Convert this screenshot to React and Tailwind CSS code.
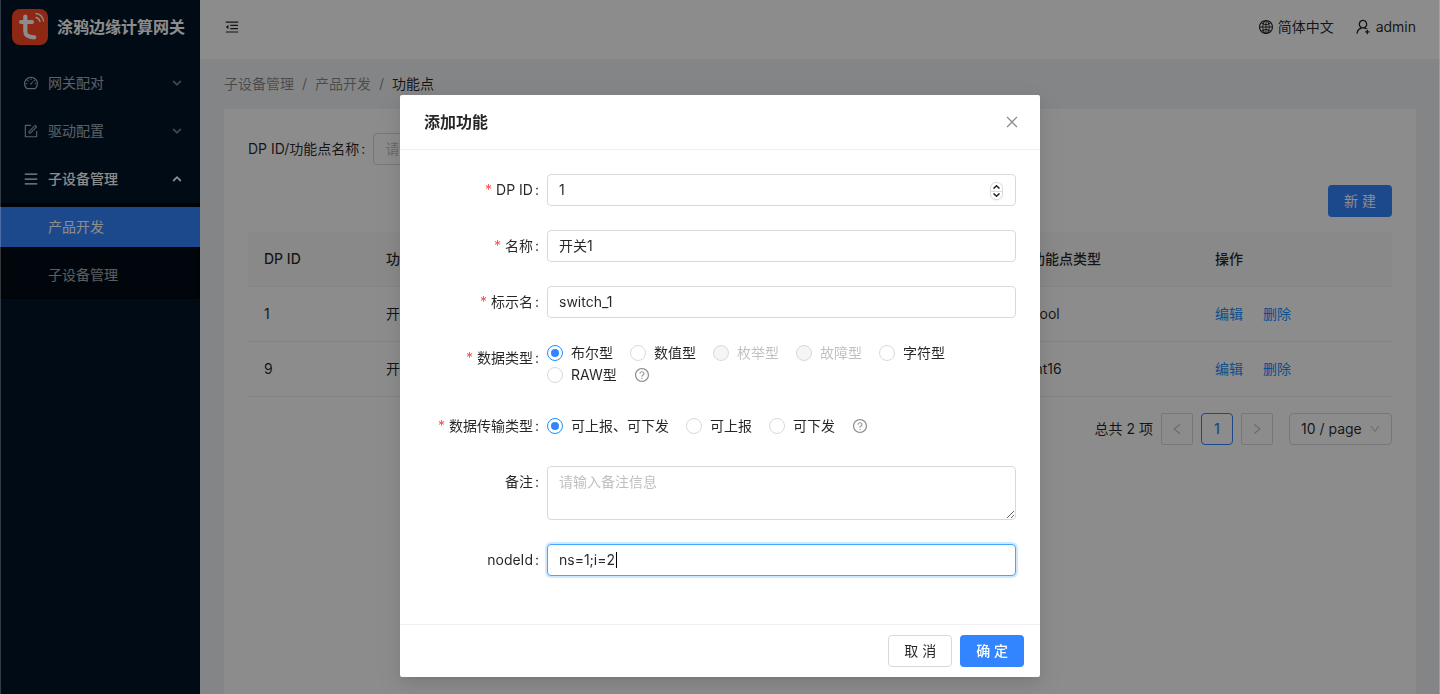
import React, { useEffect, useRef, useState } from "react";
import {
  AiOutlineClose,
  AiOutlineDashboard,
  AiOutlineDown,
  AiOutlineForm,
  AiOutlineGlobal,
  AiOutlineLeft,
  AiOutlineMenu,
  AiOutlineMenuFold,
  AiOutlineQuestionCircle,
  AiOutlineRight,
  AiOutlineUserAdd,
} from "react-icons/ai";

const rows = [
  { id: 1, name: "开关1", code: "switch_1", transfer: "可上报、可下发", type: "bool" },
  { id: 9, name: "开关9", code: "switch_9", transfer: "可上报、可下发", type: "int16" },
];

const dataTypes = [
  { value: "bool", label: "布尔型" },
  { value: "value", label: "数值型" },
  { value: "enum", label: "枚举型", disabled: true },
  { value: "fault", label: "故障型", disabled: true },
  { value: "string", label: "字符型" },
  { value: "raw", label: "RAW型" },
];

const transferTypes = [
  { value: "rw", label: "可上报、可下发" },
  { value: "ro", label: "可上报" },
  { value: "wr", label: "可下发" },
];

const inputClass =
  "block w-full h-8 px-[11px] pb-[2px] text-sm rounded border border-[#d9d9d9] bg-white outline-none placeholder:text-[#bfbfbf] focus:border-[#40a9ff] focus:shadow-[0_0_0_2px_rgba(24,144,255,0.2)]";

const Logo = () => (
  <svg viewBox="0 0 36 36" className="size-9 shrink-0" fill="none" strokeLinecap="round">
    <rect width="36" height="36" rx="8" fill="#ff4a26" />
    <path d="M13.300 7.500v14.500c0 4.500 2.500 6.300 9 6.300" stroke="#fff" strokeWidth="4.200" />
    <path d="M9 13h11" stroke="#fff" strokeWidth="4" />
    <path d="M24 8.500q3.300 .6 4 4" stroke="#fff" strokeWidth="1.300" />
    <path d="M24 4.500q6.500 1 7.500 7.500" stroke="#fff" strokeWidth="1.300" />
  </svg>
);

const Caret = ({ open }) => (
  <svg
    viewBox="0 0 10 10"
    className={`size-[10px] ${open ? "" : "opacity-70"}`}
    fill="none"
    stroke="currentColor"
    strokeWidth="1.800"
  >
    <path d={open ? "M1.200 7L5 3.200L8.800 7" : "M1.200 3L5 6.800L8.800 3"} />
  </svg>
);

const MenuTitle = ({ icon, open, children }) => (
  <button
    type="button"
    className={`flex h-10 w-full items-center gap-[9px] pl-[23px] pr-[18px] my-1 text-left ${open ? "text-white" : "text-white/65"}`}
  >
    {icon}
    <span className="flex-1">{children}</span>
    <Caret open={open} />
  </button>
);

const Sidebar = () => (
  <aside className="w-[200px] shrink-0 bg-[#001529]">
    <div className="flex h-[59px] items-center gap-2 pl-3 pb-1.5">
      <Logo />
      <h1 className="text-base font-semibold text-white whitespace-nowrap pl-px">涂鸦边缘计算网关</h1>
    </div>
    <nav className="flex flex-col">
      <div className="flex flex-col">
        <MenuTitle icon={<AiOutlineDashboard className="size-4" />}>网关配对</MenuTitle>
        <MenuTitle icon={<AiOutlineForm className="size-4" />}>驱动配置</MenuTitle>
        <MenuTitle icon={<AiOutlineMenu className="size-4" />} open>
          <span className="font-medium">子设备管理</span>
        </MenuTitle>
      </div>
      <div className="flex flex-col gap-2 bg-[#000c17] py-1 shadow-[inset_0_2px_8px_rgba(0,0,0,0.45)]">
        <a href="#" className="h-10 bg-[#3385ff] pl-12 leading-10 text-white">产品开发</a>
        <a href="#" className="h-10 pl-12 leading-10 text-white/65">子设备管理</a>
      </div>
    </nav>
  </aside>
);

const Header = () => (
  <header className="flex h-[59px] items-center justify-between bg-white px-6 pb-1.5">
    <button type="button" aria-label="收起菜单">
      <AiOutlineMenuFold className="size-4" />
    </button>
    <div className="flex items-center gap-5">
      <button type="button" className="flex items-center gap-1">
        <AiOutlineGlobal className="size-4" />
        简体中文
      </button>
      <button type="button" className="flex items-center gap-1">
        <AiOutlineUserAdd className="size-[18px]" />
        admin
      </button>
    </div>
  </header>
);

const DataTable = () => (
  <table className="w-full table-fixed text-left">
    <thead className="bg-[#fafafa]">
      <tr className="h-[54px] border-b border-[#f0f0f0]">
        <th className="w-[122px] px-4 font-medium">DP ID</th>
        <th className="px-4 font-medium">功能点名称</th>
        <th className="px-4 font-medium">标示名</th>
        <th className="px-4 font-medium">数据传输类型</th>
        <th className="w-[184px] px-4 font-medium">功能点类型</th>
        <th className="w-[193px] px-4 font-medium">操作</th>
      </tr>
    </thead>
    <tbody>
      {rows.map((row) => (
        <tr key={row.id} className="h-[55px] border-b border-[#f0f0f0]">
          <td className="px-4">{row.id}</td>
          <td className="px-4">{row.name}</td>
          <td className="px-4">{row.code}</td>
          <td className="px-4">{row.transfer}</td>
          <td className="px-4">{row.type}</td>
          <td className="px-4">
            <div className="flex gap-5 text-[#1890ff]">
              <a href="#">编辑</a>
              <a href="#">删除</a>
            </div>
          </td>
        </tr>
      ))}
    </tbody>
  </table>
);

const Pagination = () => (
  <div className="mt-4 flex items-center justify-end gap-2">
    <span>总共 2 项</span>
    <button type="button" disabled aria-label="上一页" className="flex size-8 items-center justify-center rounded-xs border border-[#d9d9d9] text-black/25">
      <AiOutlineLeft className="size-[14px]" />
    </button>
    <button type="button" className="size-8 rounded border border-[#3385ff] font-medium text-[#3385ff]">1</button>
    <button type="button" disabled aria-label="下一页" className="flex size-8 items-center justify-center rounded-xs border border-[#d9d9d9] text-black/25">
      <AiOutlineRight className="size-[14px]" />
    </button>
    <div className="relative ml-2">
      <select aria-label="每页条数" className="h-8 w-[103px] appearance-none rounded border border-[#d9d9d9] bg-white pl-[11px] pr-6">
        <option>10 / page</option>
        <option>20 / page</option>
      </select>
      <AiOutlineDown className="pointer-events-none absolute right-[11px] top-[10px] size-3 text-black/25" />
    </div>
  </div>
);

const FormItem = ({ label, required, htmlFor, children }) => (
  <div className="mb-6 flex items-start">
    <label htmlFor={htmlFor} className="flex h-8 w-[123px] shrink-0 items-center justify-end pr-2 whitespace-nowrap">
      {required && <span className="mr-1 text-[#ff4d4f]">*</span>}
      {label}
      <span className="ml-[2px]">:</span>
    </label>
    <div className="min-w-0 flex-1">{children}</div>
  </div>
);

const RadioGroup = ({ name, options, value, onChange }) => (
  <div className="flex flex-wrap items-center">
    {options.map((item) => (
      <label key={item.value} className={`mr-[9px] flex h-[22px] items-center ${item.disabled ? "text-black/25" : ""}`}>
        <input
          type="radio"
          name={name}
          disabled={item.disabled}
          checked={value === item.value}
          onChange={() => onChange(item.value)}
          className="grid size-4 appearance-none place-content-center rounded-full border border-[#d9d9d9] bg-white before:size-2 before:rounded-full checked:border-[#1890ff] checked:before:bg-[#3385ff] disabled:bg-[#f5f5f5]"
        />
        <span className="px-2">{item.label}</span>
      </label>
    ))}
    <AiOutlineQuestionCircle className="size-4 text-black/45" />
  </div>
);

const AddModal = () => {
  const [dpId, setDpId] = useState(1);
  const [dataType, setDataType] = useState("bool");
  const [transfer, setTransfer] = useState("rw");
  const [nodeId, setNodeId] = useState("ns=1;i=2");
  const nodeRef = useRef(null);

  useEffect(() => {
    nodeRef.current.focus();
    nodeRef.current.setSelectionRange(8, 8);
  }, []);

  return (
    <div className="fixed inset-0 flex items-start justify-center overflow-auto border-x border-white/20 bg-black/45 pt-[95px]">
      <div
        role="dialog"
        aria-labelledby="modal-title"
        className="w-[640px] max-w-full rounded-xs bg-white shadow-[0_3px_6px_-4px_rgba(0,0,0,0.12),0_6px_16px_0_rgba(0,0,0,0.08),0_9px_28px_8px_rgba(0,0,0,0.05)]"
      >
        <div className="flex h-[55px] items-center justify-between border-b border-[#f0f0f0] px-6">
          <h2 id="modal-title" className="text-base font-semibold">添加功能</h2>
          <button type="button" aria-label="关闭" className="-mr-1 text-black/45">
            <AiOutlineClose className="size-4" />
          </button>
        </div>

        <form className="p-6">
          <FormItem label="DP ID" required htmlFor="dpId">
            <div className="relative">
              <input
                id="dpId"
                type="number"
                value={dpId}
                onChange={(e) => setDpId(Number(e.target.value))}
                className={`${inputClass} [appearance:textfield] [&::-webkit-inner-spin-button]:appearance-none`}
              />
              <div className="absolute right-[13px] top-2 flex h-[18px] w-[13px] flex-col overflow-hidden rounded-md border border-[#dcdcdc] bg-white shadow-xs">
                <button type="button" aria-label="增加" onClick={() => setDpId(dpId + 1)} className="flex flex-1 items-center justify-center border-b border-[#dcdcdc]">
                  <svg viewBox="0 0 7 4" className="h-1 w-[7px]" fill="none" stroke="#222" strokeWidth="1.500">
                    <path d="M.5 3.500l3-2.700l3 2.700" />
                  </svg>
                </button>
                <button type="button" aria-label="减少" onClick={() => setDpId(dpId - 1)} className="flex flex-1 items-center justify-center">
                  <svg viewBox="0 0 7 4" className="h-1 w-[7px]" fill="none" stroke="#222" strokeWidth="1.500">
                    <path d="M.5 .5l3 2.700l3-2.700" />
                  </svg>
                </button>
              </div>
            </div>
          </FormItem>
          <FormItem label="名称" required htmlFor="name">
            <input id="name" type="text" defaultValue="开关1" className={inputClass} />
          </FormItem>
          <FormItem label="标示名" required htmlFor="code">
            <input id="code" type="text" defaultValue="switch_1" className={inputClass} />
          </FormItem>
          <FormItem label="数据类型" required>
            <RadioGroup name="dataType" options={dataTypes} value={dataType} onChange={setDataType} />
          </FormItem>
          <FormItem label="数据传输类型" required>
            <div className="flex h-8 items-center">
              <RadioGroup name="transfer" options={transferTypes} value={transfer} onChange={setTransfer} />
            </div>
          </FormItem>
          <FormItem label="备注" htmlFor="remark">
            <textarea
              id="remark"
              placeholder="请输入备注信息"
              className="block h-[54px] w-full resize-y rounded border border-[#d9d9d9] px-[11px] py-1 outline-none placeholder:text-[#bfbfbf]"
            />
          </FormItem>
          <FormItem label="nodeId" htmlFor="nodeId">
            <div className="relative">
              <input
                id="nodeId"
                ref={nodeRef}
                type="text"
                value={nodeId}
                onChange={(e) => setNodeId(e.target.value)}
                className={`${inputClass} ${nodeId === "ns=1;i=2" ? "caret-transparent" : ""}`}
              />
              {/* steady caret until the value is edited */}
              {nodeId === "ns=1;i=2" && <span className="pointer-events-none absolute left-[69px] top-2 h-4 w-px bg-black" />}
            </div>
          </FormItem>
        </form>

        <div className="flex justify-end gap-2 border-t border-[#f0f0f0] px-4 py-[10px]">
          <button type="button" className="h-8 rounded border border-[#d9d9d9] px-[15px]">取 消</button>
          <button type="button" className="h-8 rounded bg-[#3385ff] px-4 font-medium text-white">确 定</button>
        </div>
      </div>
    </div>
  );
};

const App = () => {
  return (
    <div className="flex min-h-screen bg-[#f0f2f5] font-[Inter,'Noto_Sans_CJK_SC',sans-serif] text-sm leading-[22px] text-black/85">
      <Sidebar />
      <div className="flex min-w-0 flex-1 flex-col">
        <Header />
        <main className="flex flex-1 flex-col px-6 pt-[14px]">
          <nav className="flex gap-2 text-black/45">
            <a href="#">子设备管理</a>
            <span>/</span>
            <a href="#">产品开发</a>
            <span>/</span>
            <span className="text-black/85">功能点</span>
          </nav>

          <section className="mt-[14px] flex-1 bg-white p-6">
            <div className="flex items-center gap-2">
              <label htmlFor="keyword">
                DP ID/功能点名称<span className="ml-[2px]">:</span>
              </label>
              <div className="w-[240px]">
                <input id="keyword" type="text" placeholder="请输入" className={inputClass} />
              </div>
            </div>
            <div className="mt-5 mb-[15px] flex justify-end">
              <button type="button" className="h-8 rounded bg-[#3385ff] px-4 text-white">新 建</button>
            </div>
            <DataTable />
            <Pagination />
          </section>
        </main>
      </div>
      <AddModal />
    </div>
  );
};

export default App;
